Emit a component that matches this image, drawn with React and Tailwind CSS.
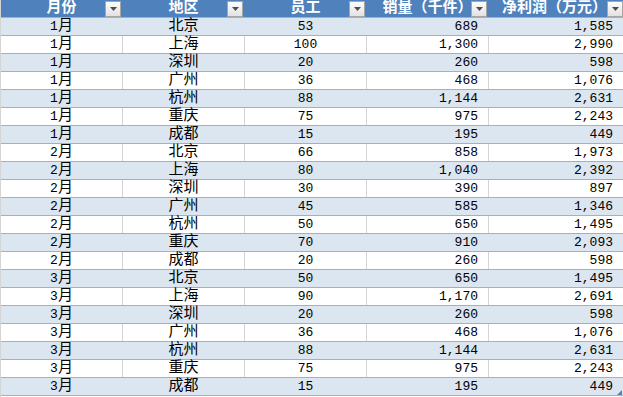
import React from 'react';

const rows = [
  ['1月', '北京', '53', '689', '1,585'],
  ['1月', '上海', '100', '1,300', '2,990'],
  ['1月', '深圳', '20', '260', '598'],
  ['1月', '广州', '36', '468', '1,076'],
  ['1月', '杭州', '88', '1,144', '2,631'],
  ['1月', '重庆', '75', '975', '2,243'],
  ['1月', '成都', '15', '195', '449'],
  ['2月', '北京', '66', '858', '1,973'],
  ['2月', '上海', '80', '1,040', '2,392'],
  ['2月', '深圳', '30', '390', '897'],
  ['2月', '广州', '45', '585', '1,346'],
  ['2月', '杭州', '50', '650', '1,495'],
  ['2月', '重庆', '70', '910', '2,093'],
  ['2月', '成都', '20', '260', '598'],
  ['3月', '北京', '50', '650', '1,495'],
  ['3月', '上海', '90', '1,170', '2,691'],
  ['3月', '深圳', '20', '260', '598'],
  ['3月', '广州', '36', '468', '1,076'],
  ['3月', '杭州', '88', '1,144', '2,631'],
  ['3月', '重庆', '75', '975', '2,243'],
  ['3月', '成都', '15', '195', '449'],
];

const headers = ['月份', '地区', '员工', '销量（千件）', '净利润（万元）'];
const widths = ['w-[122px]', 'w-[122px]', 'w-[122px]', 'w-[122px]', 'w-[136px]'];
const font = "font-['Liberation_Mono','Noto_Sans_CJK_SC',monospace]";

function FilterButton() {
  return (
    <span className="absolute right-[1px] top-[1px] flex h-[16px] w-[16px] items-center justify-center border border-[#a6a6a6] bg-gradient-to-b from-[#fdfdfd] to-[#e2e2e2]">
      <svg width="7" height="4" viewBox="0 0 7 4">
        <path d="M0 0h7L3.5 4z" fill="#4d4d4d" />
      </svg>
    </span>
  );
}

export default function App() {
  return (
    <div className={`relative h-[397px] w-[623px] overflow-hidden border-l border-[#d4d4d4] bg-white ${font}`}>
      <div className="flex h-[18px] border-b border-[#95b3d7] bg-[#4f81bd]">
        {headers.map((h, i) => (
          <div
            key={h}
            className={`relative flex shrink-0 items-center justify-center border-r border-[#4f81bd] text-[15px] font-bold leading-[17px] text-white ${widths[i]}`}
          >
            <span className={i === 4 ? 'pr-[4px]' : ''}>{h}</span>
            <FilterButton />
          </div>
        ))}
      </div>
      {rows.map((r, idx) => {
        const band = idx % 2 === 0;
        const line = band ? 'border-[#dce6f1]' : 'border-[#d4d4d4]';
        return (
          <div
            key={idx}
            className={`flex h-[18px] border-b border-[#95b3d7] text-black ${band ? 'bg-[#dce6f1]' : 'bg-white'}`}
          >
            <div className={`flex shrink-0 items-end justify-center border-r text-[15px] leading-[17px] ${line} ${widths[0]}`}>
              <span className="text-[13px]">{r[0].slice(0, 1)}</span>
              {r[0].slice(1)}
            </div>
            <div className={`flex shrink-0 items-end justify-center border-r text-[15px] leading-[17px] ${line} ${widths[1]}`}>
              {r[1]}
            </div>
            <div className={`flex shrink-0 items-end justify-center border-r text-[13px] leading-[17px] ${line} ${widths[2]}`}>
              {r[2]}
            </div>
            <div className={`flex shrink-0 items-end justify-end border-r pr-[10px] text-[13px] leading-[17px] ${line} ${widths[3]}`}>
              {r[3]}
            </div>
            <div className={`flex shrink-0 items-end justify-end pr-[12px] text-[13px] leading-[17px] ${widths[4]}`}>
              {r[4]}
            </div>
          </div>
        );
      })}
      <svg className="absolute left-[616px] top-[390px]" width="5" height="5" viewBox="0 0 5 5">
        <path d="M5 0v5H0z" fill="#4f81bd" />
      </svg>
    </div>
  );
}
